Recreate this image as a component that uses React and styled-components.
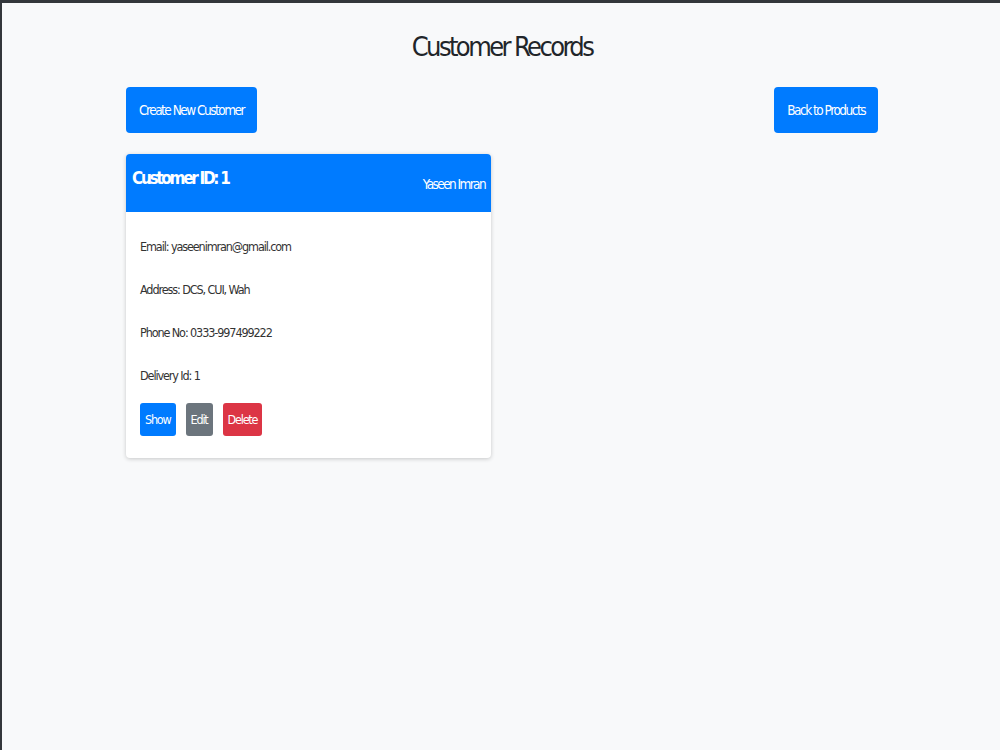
import styled, { createGlobalStyle } from "styled-components";

const GlobalStyle = createGlobalStyle`
  html, body {
    margin: 0;
    padding: 0;
  }
  body {
    background: #f8f9fa;
    font-family: "DejaVu Sans", "Liberation Sans", sans-serif;
    font-stretch: condensed;
    color: #212529;
    min-height: 750px;
    box-sizing: border-box;
    border-top: 3px solid #33373b;
    border-left: 2px solid #33373b;
  }
  button {
    font-stretch: condensed;
  }
`;

const customers = [
  {
    id: 1,
    name: "Yaseen Imran",
    email: "yaseenimran@gmail.com",
    address: "DCS, CUI, Wah",
    phone: "0333-997499222",
    deliveryId: 1,
  },
];

function App() {
  const renderedCustomers = customers.map((customer) => {
    return (
      <Card key={customer.id}>
        <CardHeader>
          <CardTitle>Customer ID: {customer.id}</CardTitle>
          <CustomerName>{customer.name}</CustomerName>
        </CardHeader>
        <CardBody>
          <Field>Email: {customer.email}</Field>
          <Field>Address: {customer.address}</Field>
          <Field>Phone No: {customer.phone}</Field>
          <Field>Delivery Id: {customer.deliveryId}</Field>
          <ActionRow>
            <SmallButton $color="#007bff">Show</SmallButton>
            <SmallButton $color="#6c757d">Edit</SmallButton>
            <SmallButton $color="#dc3545">Delete</SmallButton>
          </ActionRow>
        </CardBody>
      </Card>
    );
  });

  return (
    <>
      <GlobalStyle />
      <Page>
        <Title>Customer Records</Title>
        <Toolbar>
          <MainButton>Create New Customer</MainButton>
          <MainButton>Back to Products</MainButton>
        </Toolbar>
        <CardGrid>{renderedCustomers}</CardGrid>
      </Page>
    </>
  );
}

export default App;

const Page = styled.div`
  width: 754px;
  box-sizing: border-box;
  padding-left: 2px;
  margin: 0 auto;
  display: flex;
  flex-direction: column;
`;

const Title = styled.h1`
  margin: 23px 0 0;
  height: 42px;
  line-height: 42px;
  font-size: 27px;
  font-weight: 400;
  letter-spacing: -2.6px;
  text-align: center;
  color: #212529;
`;

const Toolbar = styled.div`
  display: flex;
  justify-content: space-between;
  margin-top: 19px;
`;

const MainButton = styled.button`
  height: 46px;
  padding: 0 13px;
  border: none;
  border-radius: 4px;
  background: #007bff;
  color: #fff;
  font-family: inherit;
  font-size: 13.5px;
  letter-spacing: -1.5px;
  cursor: pointer;
`;

const CardGrid = styled.div`
  display: grid;
  grid-template-columns: 365px;
  margin-top: 21px;
`;

const Card = styled.div`
  background: #fff;
  border-radius: 4px;
  box-shadow: 0 1px 4px rgba(0, 0, 0, 0.2);
  overflow: hidden;
`;

const CardHeader = styled.div`
  display: flex;
  justify-content: space-between;
  align-items: flex-start;
  height: 58px;
  box-sizing: border-box;
  padding: 12px 6px;
  background: #007bff;
  color: #fff;
`;

const CardTitle = styled.h5`
  margin: 0;
  font-size: 17px;
  line-height: 24px;
  font-weight: 700;
  letter-spacing: -2.3px;
`;

const CustomerName = styled.span`
  margin-top: 8px;
  font-size: 13.5px;
  line-height: 20px;
  letter-spacing: -1.6px;
`;

const CardBody = styled.div`
  display: flex;
  flex-direction: column;
  gap: 22px;
  padding: 24px 14px 22px;
`;

const Field = styled.p`
  margin: 0;
  font-size: 12.5px;
  line-height: 21px;
  letter-spacing: -1.1px;
  color: #333;
`;

const ActionRow = styled.div`
  display: flex;
  gap: 10px;
  margin-top: -5px;
`;

const SmallButton = styled.button`
  height: 33px;
  padding: 0 5px;
  border: none;
  border-radius: 3px;
  background: ${(props) => props.$color};
  color: #fff;
  font-family: inherit;
  font-size: 12.5px;
  letter-spacing: -1.2px;
  cursor: pointer;
`;
